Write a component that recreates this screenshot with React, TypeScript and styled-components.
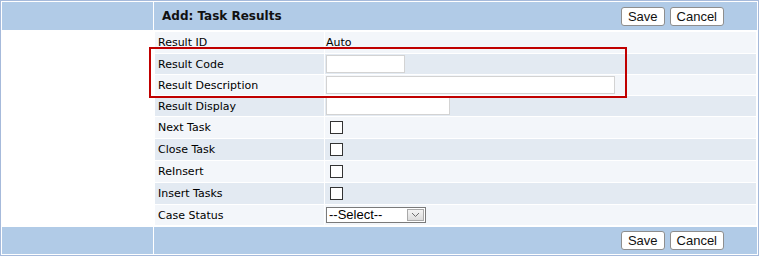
import React from "react";
import styled, { createGlobalStyle } from "styled-components";

const Global = createGlobalStyle`
  html, body { margin: 0; padding: 0; background: #ffffff; }
  body { font-family: "DejaVu Sans", Verdana, sans-serif; }
`;

const Frame = styled.div`
  position: relative;
  box-sizing: border-box;
  width: 759px;
  height: 256px;
  border: 1px solid #a6badb;
  padding: 1px;
  background: #ffffff;
  display: grid;
  grid-template-columns: 151px 603px;
  grid-template-rows: 28px 195px 27px;
  gap: 1px;
`;

const BarSide = styled.div`
  background: #b1cbe7;
`;

const Bar = styled.div<{ $footer?: boolean }>`
  background: #b1cbe7;
  display: flex;
  align-items: center;
  justify-content: ${(p) => (p.$footer ? "flex-end" : "space-between")};
  padding: 0 33px 0 8px;
`;

const Title = styled.div`
  font-family: "DejaVu Sans", Verdana, sans-serif;
  font-weight: bold;
  font-size: 12px;
  color: #111111;
`;

const Buttons = styled.div`
  display: flex;
  gap: 5px;
`;

const Button = styled.button`
  box-sizing: border-box;
  height: 19px;
  padding: 0 6px;
  border: 1px solid #8e8e8e;
  border-radius: 3px;
  background: #ffffff;
  font-family: "Liberation Sans", Arial, sans-serif;
  font-size: 13px;
  color: #111111;
  line-height: 17px;
`;

const Side = styled.div`
  background: #ffffff;
`;

const Content = styled.div`
  padding: 1px;
  display: flex;
  flex-direction: column;
  gap: 1px;
`;

const Row = styled.div<{ $h: number }>`
  display: grid;
  grid-template-columns: 169px 1fr;
  gap: 1px;
  height: ${(p) => p.$h}px;
`;

const Label = styled.div<{ $alt?: boolean }>`
  background: ${(p) => (p.$alt ? "#e3eaf2" : "#f3f6fa")};
  display: flex;
  align-items: center;
  padding-left: 3px;
  font-size: 11px;
  color: #000000;
`;

const Value = styled.div<{ $alt?: boolean }>`
  background: ${(p) => (p.$alt ? "#e3eaf2" : "#f3f6fa")};
  display: flex;
  align-items: center;
  padding-left: 1px;
  font-size: 11px;
  color: #000000;
`;

const TextInput = styled.input<{ $w: number }>`
  box-sizing: border-box;
  width: ${(p) => p.$w}px;
  height: 18px;
  margin: 0;
  border: 1px solid #d3d3d3;
  background: #ffffff;
  outline: none;
`;

const Check = styled.input`
  appearance: none;
  box-sizing: border-box;
  width: 13px;
  height: 13px;
  margin: 0 0 0 4px;
  border: 1px solid #333333;
  background: #ffffff;
`;

const SelectBox = styled.div`
  box-sizing: border-box;
  width: 100px;
  height: 16px;
  border: 1px solid #7a7a7a;
  background: #ffffff;
  display: flex;
  align-items: stretch;
`;

const SelectText = styled.span`
  flex: 1;
  font-family: "Liberation Sans", Arial, sans-serif;
  font-size: 13px;
  line-height: 14px;
  padding-left: 2px;
  color: #000000;
`;

const SelectArrow = styled.span`
  box-sizing: border-box;
  width: 17px;
  margin: 1px;
  border: 1px solid #a9a9a9;
  background: linear-gradient(#f4f4f4, #dcdcdc);
  display: flex;
  align-items: center;
  justify-content: center;
`;

const Highlight = styled.div`
  position: absolute;
  left: 148px;
  top: 46px;
  width: 478px;
  height: 51px;
  box-sizing: border-box;
  border: 2px solid #c00000;
  pointer-events: none;
`;

type RowDef = {
  label: string;
  h: number;
  kind: "text" | "input" | "check" | "select";
  w?: number;
};

const rows: RowDef[] = [
  { label: "Result ID", h: 21, kind: "text" },
  { label: "Result Code", h: 20, kind: "input", w: 79 },
  { label: "Result Description", h: 20, kind: "input", w: 289 },
  { label: "Result Display", h: 20, kind: "input", w: 124 },
  { label: "Next Task", h: 21, kind: "check" },
  { label: "Close Task", h: 21, kind: "check" },
  { label: "ReInsert", h: 21, kind: "check" },
  { label: "Insert Tasks", h: 21, kind: "check" },
  { label: "Case Status", h: 20, kind: "select" },
];

const ActionButtons = () => (
  <Buttons>
    <Button>Save</Button>
    <Button>Cancel</Button>
  </Buttons>
);

export default function App() {
  return (
    <>
      <Global />
      <Frame>
        <BarSide />
        <Bar>
          <Title>Add: Task Results</Title>
          <ActionButtons />
        </Bar>
        <Side />
        <Content>
          {rows.map((r, i) => {
            const alt = i % 2 === 1;
            return (
              <Row key={r.label} $h={r.h}>
                <Label $alt={alt}>{r.label}</Label>
                <Value $alt={alt}>
                  {r.kind === "text" && "Auto"}
                  {r.kind === "input" && <TextInput $w={r.w || 80} type="text" />}
                  {r.kind === "check" && <Check type="checkbox" />}
                  {r.kind === "select" && (
                    <SelectBox>
                      <SelectText>--Select--</SelectText>
                      <SelectArrow>
                        <svg width="9" height="6" viewBox="0 0 9 6">
                          <path d="M1 1 L4.5 4.5 L8 1" fill="none" stroke="#6d6d6d" strokeWidth="1" />
                        </svg>
                      </SelectArrow>
                    </SelectBox>
                  )}
                </Value>
              </Row>
            );
          })}
        </Content>
        <BarSide />
        <Bar $footer>
          <ActionButtons />
        </Bar>
        <Highlight />
      </Frame>
    </>
  );
}
